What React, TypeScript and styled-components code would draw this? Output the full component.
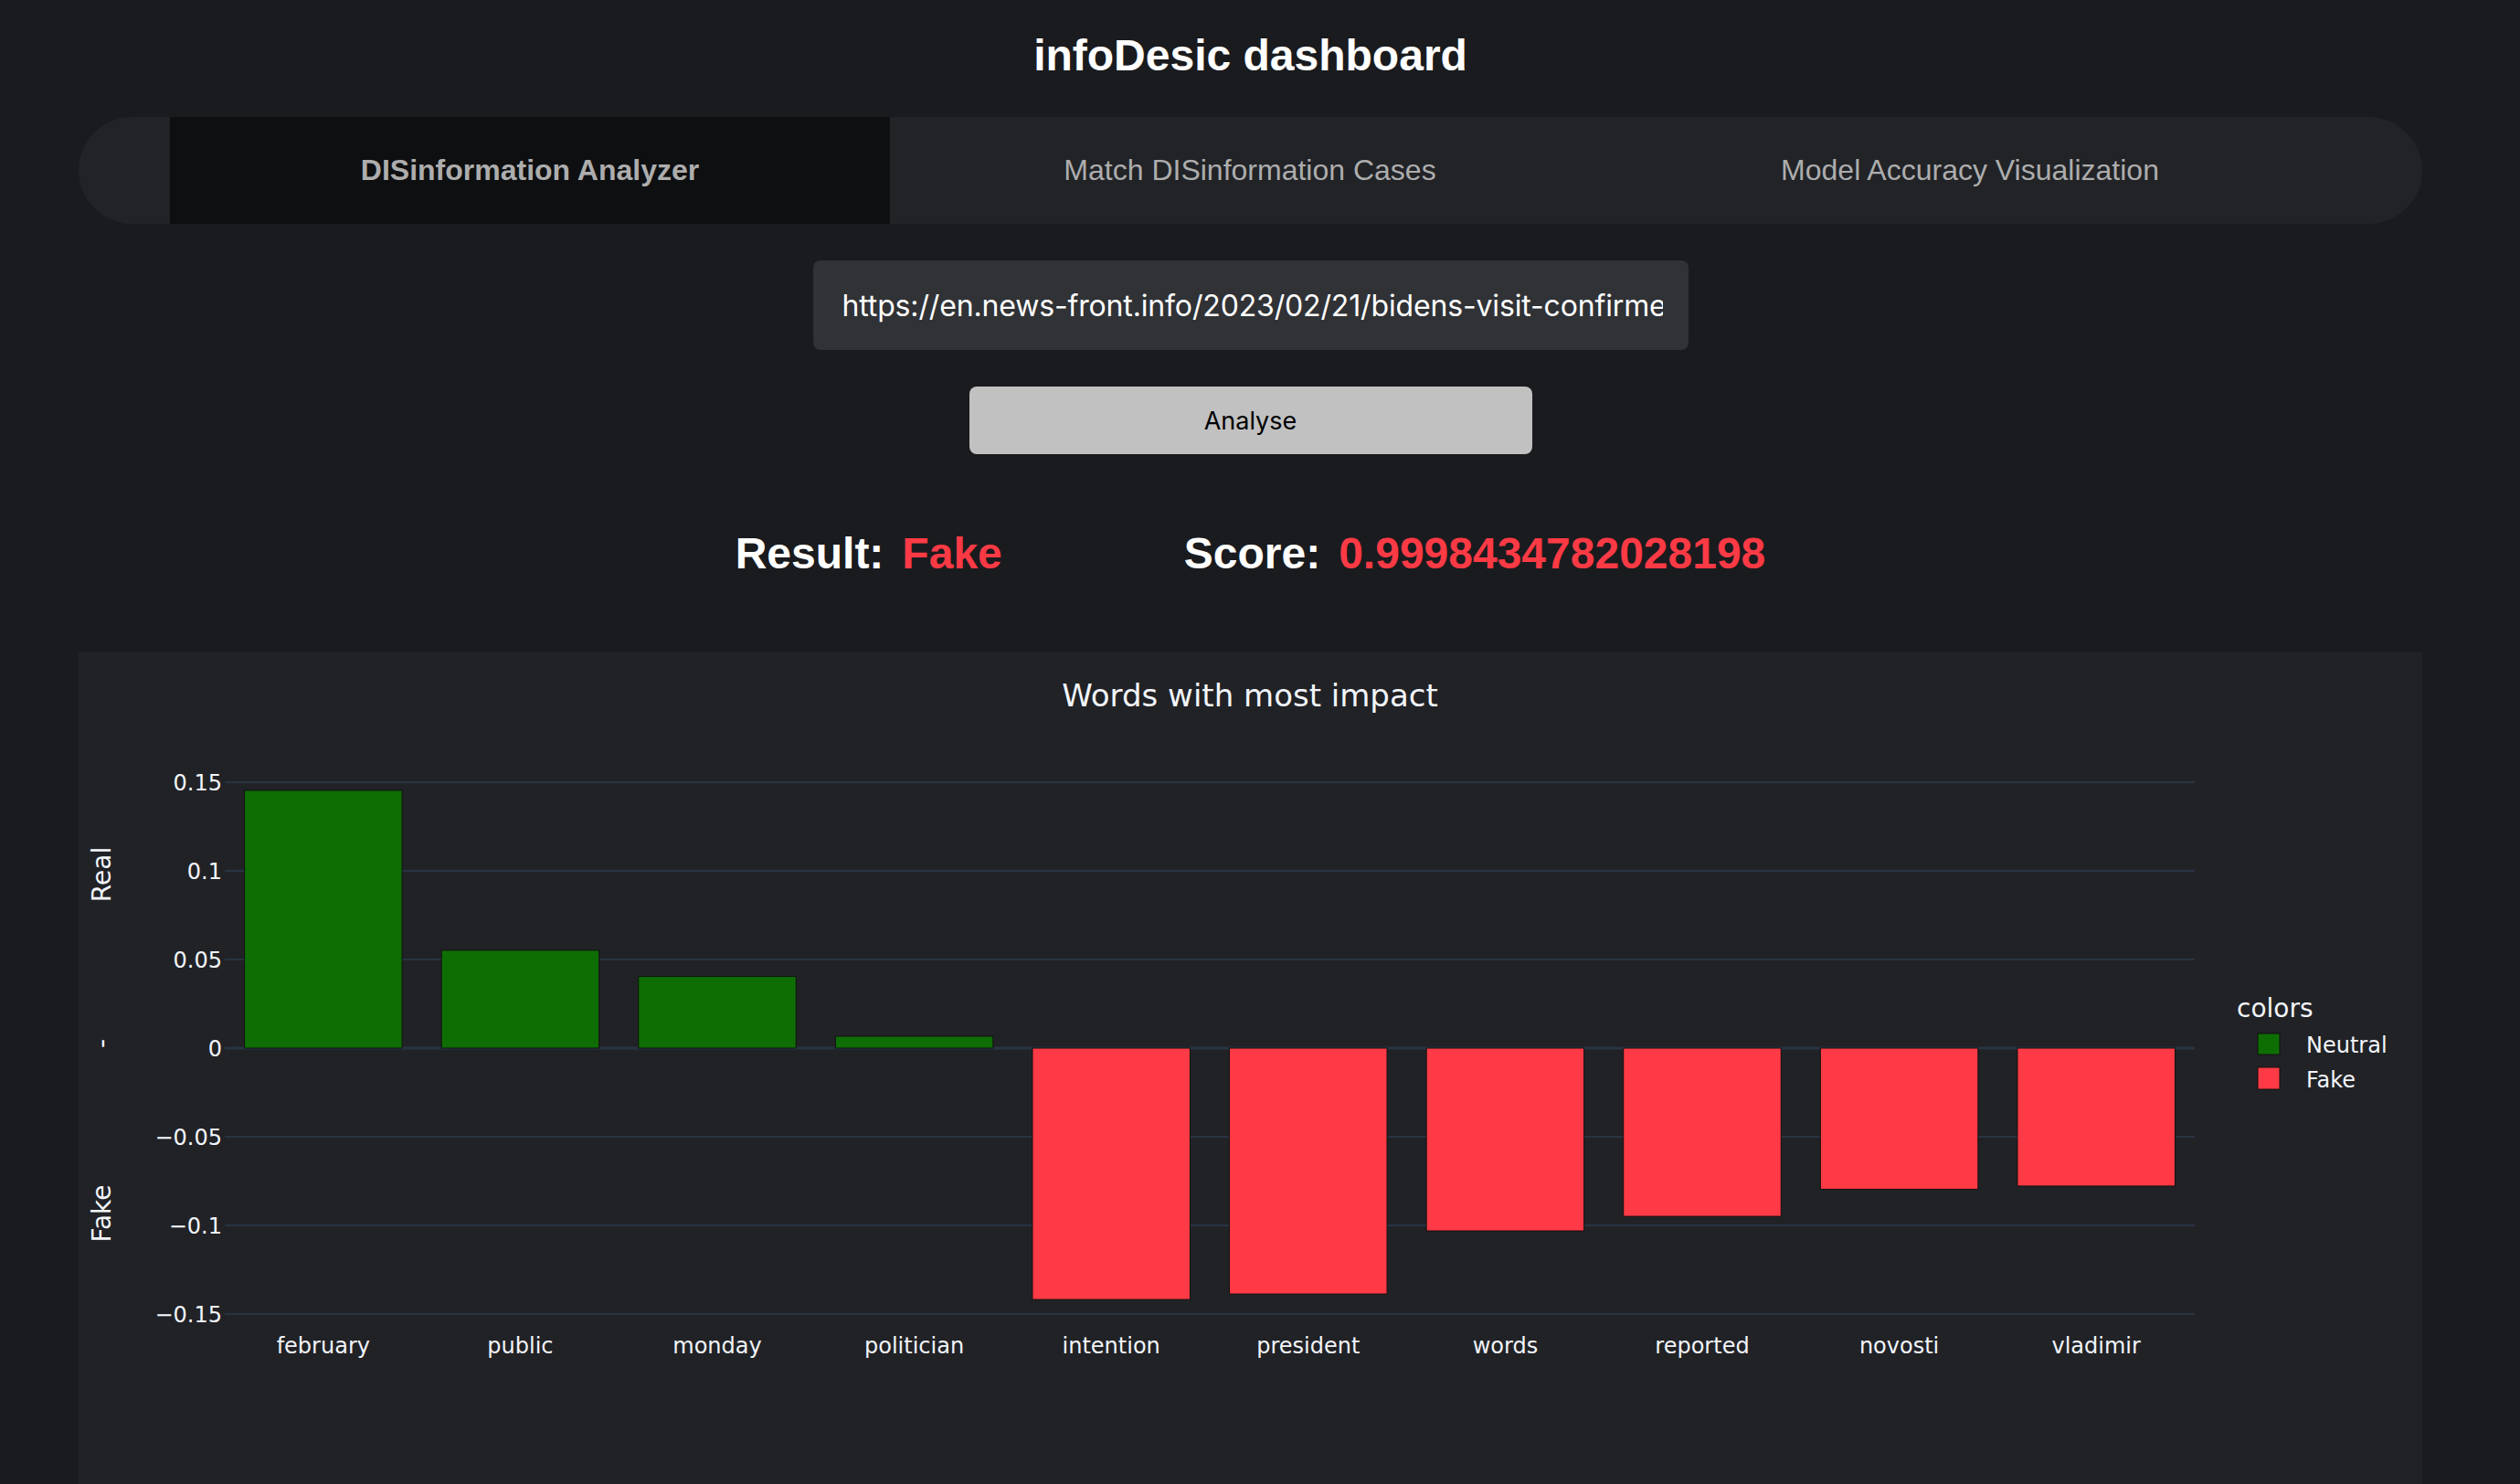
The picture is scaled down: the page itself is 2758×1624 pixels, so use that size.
import React from "react";
import styled, { createGlobalStyle } from "styled-components";

const GlobalStyle = createGlobalStyle`
  html, body {
    margin: 0;
    padding: 0;
    background: #1a1b1e;
  }
  #root {
    min-height: 100vh;
  }
`;

const Page = styled.div`
  display: flex;
  flex-direction: column;
  align-items: center;
  padding: 0 107px 0 86px;
  font-family: "Liberation Sans", Arial, sans-serif;
`;

const Title = styled.h1`
  margin: 0;
  padding-top: 33px;
  font-size: 48px;
  line-height: 55px;
  font-weight: 700;
  color: #ffffff;
`;

const TabBar = styled.nav`
  align-self: stretch;
  display: flex;
  height: 117px;
  margin-top: 40px;
  padding: 0 101px 0 100px;
  border-radius: 59px;
  background: #212327;
`;

const Tab = styled.div<{ $active?: boolean }>`
  flex: 1;
  display: flex;
  align-items: center;
  justify-content: center;
  font-size: 32px;
  font-weight: ${(p) => (p.$active ? 700 : 400)};
  color: #adadad;
  background: ${(p) => (p.$active ? "#0e0f11" : "transparent")};
`;

const UrlInput = styled.input`
  box-sizing: border-box;
  width: 958px;
  height: 98px;
  margin-top: 40px;
  padding: 0 28px 0 32px;
  border: none;
  border-radius: 8px;
  outline: none;
  background: #303236;
  color: #ffffff;
  font-family: Inter, "Open Sans", sans-serif;
  font-size: 32px;
  letter-spacing: -0.15px;
`;

const AnalyseButton = styled.button`
  width: 616px;
  height: 74px;
  margin-top: 40px;
  border: none;
  border-radius: 8px;
  background: #c1c1c1;
  color: #000000;
  font-family: Inter, "Open Sans", sans-serif;
  font-size: 27px;
  cursor: pointer;
`;

const ResultRow = styled.div`
  display: flex;
  gap: 199px;
  margin-top: 81px;
`;

const ResultGroup = styled.div`
  display: flex;
  gap: 20px;
  font-size: 48px;
  line-height: 55px;
  font-weight: 700;
`;

const ResultLabel = styled.span`
  color: #ffffff;
`;

const ResultValue = styled.span`
  color: #fc3a45;
`;

const ChartPanel = styled.section`
  align-self: stretch;
  height: 910px;
  margin-top: 81px;
  background: #212226;
`;

const ChartSvg = styled.svg`
  display: block;
  width: 100%;
  height: 100%;
  font-family: "DejaVu Sans", Verdana, sans-serif;
`;

const words = [
  "february",
  "public",
  "monday",
  "politician",
  "intention",
  "president",
  "words",
  "reported",
  "novosti",
  "vladimir",
];
const values = [
  0.1454, 0.0552, 0.0404, 0.0067, -0.1418, -0.1387, -0.1031, -0.0949, -0.0796,
  -0.0778,
];

const GREEN = "#0e6e04";
const RED = "#fd3a45";
const TEXT = "#f2f5fa";
const GRID = "#283442";

const X0 = 160;
const CAT = 215.6;
const BAR_W = 172.5;
const ZERO_Y = 433;
const PER = 1940; // px per unit

const yOf = (v: number) => ZERO_Y - v * PER;

const ticks = [
  { v: 0.15, label: "0.15" },
  { v: 0.1, label: "0.1" },
  { v: 0.05, label: "0.05" },
  { v: 0, label: "0" },
  { v: -0.05, label: "\u22120.05" },
  { v: -0.1, label: "\u22120.1" },
  { v: -0.15, label: "\u22120.15" },
];

function ImpactChart() {
  const x1 = X0 + CAT * words.length;
  return (
    <ChartSvg viewBox="0 0 2565 910" preserveAspectRatio="xMinYMin meet">
      <text x={1282} y={59} fontSize={34} fill={TEXT} textAnchor="middle">
        Words with most impact
      </text>

      {ticks.map((t) => (
        <g key={t.label}>
          <line
            x1={X0}
            x2={x1}
            y1={yOf(t.v)}
            y2={yOf(t.v)}
            stroke={GRID}
            strokeWidth={t.v === 0 ? 3 : 2}
          />
          <text
            x={157}
            y={yOf(t.v) + 8.5}
            fontSize={24}
            fill={TEXT}
            textAnchor="end"
          >
            {t.label}
          </text>
        </g>
      ))}

      {values.map((v, i) => {
        const x = X0 + CAT * i + (CAT - BAR_W) / 2;
        const top = v >= 0 ? yOf(v) : ZERO_Y;
        const h = Math.abs(v) * PER;
        return (
          <rect
            key={words[i]}
            x={x}
            y={top}
            width={BAR_W}
            height={h}
            fill={v >= 0 ? GREEN : RED}
            stroke="#111111"
            strokeWidth={1}
          />
        );
      })}

      {words.map((w, i) => (
        <text
          key={w}
          x={X0 + CAT * i + CAT / 2}
          y={767}
          fontSize={24}
          fill={TEXT}
          textAnchor="middle"
        >
          {w}
        </text>
      ))}

      {[
        { t: "Real", y: 243 },
        { t: "-", y: 428 },
        { t: "Fake", y: 614 },
      ].map((a) => (
        <text
          key={a.t}
          x={35}
          y={a.y}
          fontSize={28}
          fill={TEXT}
          textAnchor="middle"
          transform={`rotate(-90 35 ${a.y})`}
        >
          {a.t}
        </text>
      ))}

      <text x={2362} y={399} fontSize={28} fill={TEXT}>
        colors
      </text>
      <rect x={2385} y={417} width={24} height={23} fill={GREEN} stroke="#111111" strokeWidth={1} />
      <text x={2438} y={438} fontSize={24} fill={TEXT}>
        Neutral
      </text>
      <rect x={2385} y={454} width={24} height={24} fill={RED} stroke="#111111" strokeWidth={1} />
      <text x={2438} y={476} fontSize={24} fill={TEXT}>
        Fake
      </text>
    </ChartSvg>
  );
}

export default function App() {
  return (
    <>
      <GlobalStyle />
      <Page>
        <Title>infoDesic dashboard</Title>
        <TabBar>
          <Tab $active>DISinformation Analyzer</Tab>
          <Tab>Match DISinformation Cases</Tab>
          <Tab>Model Accuracy Visualization</Tab>
        </TabBar>
        <UrlInput
          type="text"
          readOnly
          defaultValue="https://en.news-front.info/2023/02/21/bidens-visit-confirmed-the-usa-is-the-real-party-to-the-conflict/"
        />
        <AnalyseButton type="button">Analyse</AnalyseButton>
        <ResultRow>
          <ResultGroup>
            <ResultLabel>Result:</ResultLabel>
            <ResultValue>Fake</ResultValue>
          </ResultGroup>
          <ResultGroup>
            <ResultLabel>Score:</ResultLabel>
            <ResultValue>0.9998434782028198</ResultValue>
          </ResultGroup>
        </ResultRow>
        <ChartPanel>
          <ImpactChart />
        </ChartPanel>
      </Page>
    </>
  );
}
